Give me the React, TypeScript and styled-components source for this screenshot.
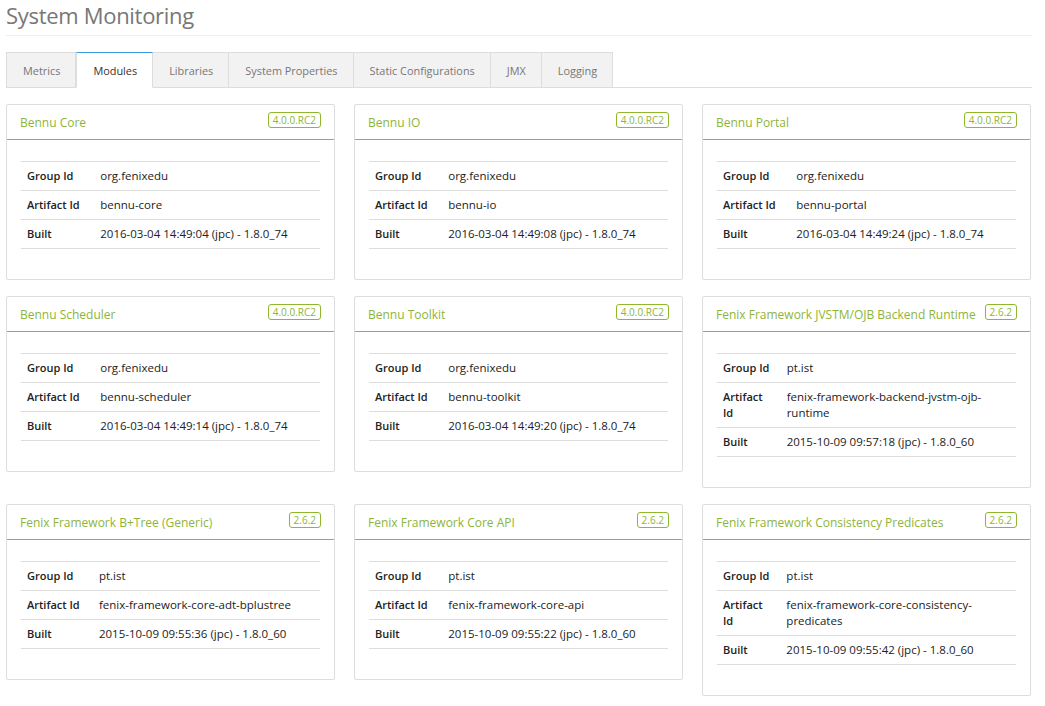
import React from "react";
import styled, { createGlobalStyle } from "styled-components";

const Global = createGlobalStyle`
  html, body { margin: 0; padding: 0; background: #fff; }
  body { font-family: "Open Sans", "Liberation Sans", sans-serif; color: #222; }
`;

const Page = styled.div`
  width: 1026px;
  padding: 0 0 12px 6px;
`;

const Header = styled.div`
  border-bottom: 1px solid #eee;
  padding: 1px 0 5px;
  margin-bottom: 16px;
`;

const Title = styled.h1`
  margin: 0;
  font-size: 22px;
  font-weight: 400;
  color: #777;
  line-height: 29px;
  letter-spacing: -0.3px;
`;

const TabBar = styled.ul`
  display: flex;
  list-style: none;
  margin: 0 0 16px;
  padding: 0;
  border-bottom: 1px solid #ddd;
`;

const Tab = styled.li<{ $active?: boolean }>`
  height: 36px;
  box-sizing: border-box;
  display: flex;
  align-items: center;
  padding: 0 15px 0 16px;
  font-size: 10.9px;
  margin-bottom: -1px;
  border: 1px solid #ddd;
  border-left-width: ${(p) => (p.$active ? "1px" : "0")};
  border-top: ${(p) => (p.$active ? "1px solid #3a9ae0" : "1px solid #ddd")};
  border-bottom-color: ${(p) => (p.$active ? "#fff" : "#ddd")};
  background: ${(p) => (p.$active ? "#fff" : "#f2f2f2")};
  color: ${(p) => (p.$active ? "#333" : "#777")};
  &:first-child { border-left-width: 1px; }
`;

const Grid = styled.div`
  display: grid;
  grid-template-columns: repeat(3, 329px);
  column-gap: 19px;
  row-gap: 16px;
  align-items: start;
`;

const Card = styled.div`
  border: 1px solid #ddd;
  border-radius: 2px;
  background: #fff;
`;

const CardHead = styled.div`
  display: flex;
  justify-content: space-between;
  align-items: flex-start;
  padding: 7px 13px 0 13px;
  height: 35px;
  box-sizing: border-box;
  border-bottom: 1px solid #8fb82c;
`;

const CardTitle = styled.div`
  color: #8db53a;
  font-size: 12px;
  line-height: 22px;
`;

const Badge = styled.span`
  border: 1px solid #8fb82c;
  border-radius: 3px;
  color: #8db53a;
  font-size: 10px;
  line-height: 14px;
  padding: 0 4px;
  white-space: nowrap;
`;

const CardBody = styled.div`
  padding: 21px 14px 30px;
`;

const Table = styled.table`
  width: 100%;
  border-collapse: collapse;
  font-size: 11.5px;
  line-height: 16px;
`;

const Row = styled.tr`
  border-top: 1px solid #ddd;
  border-bottom: 1px solid #ddd;
  & + & { border-top-color: #eee; }
`;

const Label = styled.th`
  text-align: left;
  font-weight: 600;
  font-size: 11px;
  color: #222;
  padding: 6px 6px;
  vertical-align: top;
`;

const Value = styled.td`
  padding: 6px 6px;
  color: #222;
  vertical-align: top;
`;

type Mod = { name: string; version: string; group: string; artifact: string; built: string };

const modules: Mod[] = [
  { name: "Bennu Core", version: "4.0.0.RC2", group: "org.fenixedu", artifact: "bennu-core", built: "2016-03-04 14:49:04 (jpc) - 1.8.0_74" },
  { name: "Bennu IO", version: "4.0.0.RC2", group: "org.fenixedu", artifact: "bennu-io", built: "2016-03-04 14:49:08 (jpc) - 1.8.0_74" },
  { name: "Bennu Portal", version: "4.0.0.RC2", group: "org.fenixedu", artifact: "bennu-portal", built: "2016-03-04 14:49:24 (jpc) - 1.8.0_74" },
  { name: "Bennu Scheduler", version: "4.0.0.RC2", group: "org.fenixedu", artifact: "bennu-scheduler", built: "2016-03-04 14:49:14 (jpc) - 1.8.0_74" },
  { name: "Bennu Toolkit", version: "4.0.0.RC2", group: "org.fenixedu", artifact: "bennu-toolkit", built: "2016-03-04 14:49:20 (jpc) - 1.8.0_74" },
  { name: "Fenix Framework JVSTM/OJB Backend Runtime", version: "2.6.2", group: "pt.ist", artifact: "fenix-framework-backend-jvstm-ojb-runtime", built: "2015-10-09 09:57:18 (jpc) - 1.8.0_60" },
  { name: "Fenix Framework B+Tree (Generic)", version: "2.6.2", group: "pt.ist", artifact: "fenix-framework-core-adt-bplustree", built: "2015-10-09 09:55:36 (jpc) - 1.8.0_60" },
  { name: "Fenix Framework Core API", version: "2.6.2", group: "pt.ist", artifact: "fenix-framework-core-api", built: "2015-10-09 09:55:22 (jpc) - 1.8.0_60" },
  { name: "Fenix Framework Consistency Predicates", version: "2.6.2", group: "pt.ist", artifact: "fenix-framework-core-consistency-predicates", built: "2015-10-09 09:55:42 (jpc) - 1.8.0_60" },
];

const tabs = ["Metrics", "Modules", "Libraries", "System Properties", "Static Configurations", "JMX", "Logging"];

export default function App() {
  return (
    <Page>
      <Global />
      <Header>
        <Title>System Monitoring</Title>
      </Header>
      <TabBar>
        {tabs.map((t) => (
          <Tab key={t} $active={t === "Modules"}>{t}</Tab>
        ))}
      </TabBar>
      <Grid>
        {modules.map((m) => (
          <Card key={m.name}>
            <CardHead>
              <CardTitle>{m.name}</CardTitle>
              <Badge>{m.version}</Badge>
            </CardHead>
            <CardBody>
              <Table>
                <tbody>
                  <Row><Label>Group Id</Label><Value>{m.group}</Value></Row>
                  <Row><Label>Artifact Id</Label><Value>{m.artifact}</Value></Row>
                  <Row><Label>Built</Label><Value>{m.built}</Value></Row>
                </tbody>
              </Table>
            </CardBody>
          </Card>
        ))}
      </Grid>
    </Page>
  );
}
